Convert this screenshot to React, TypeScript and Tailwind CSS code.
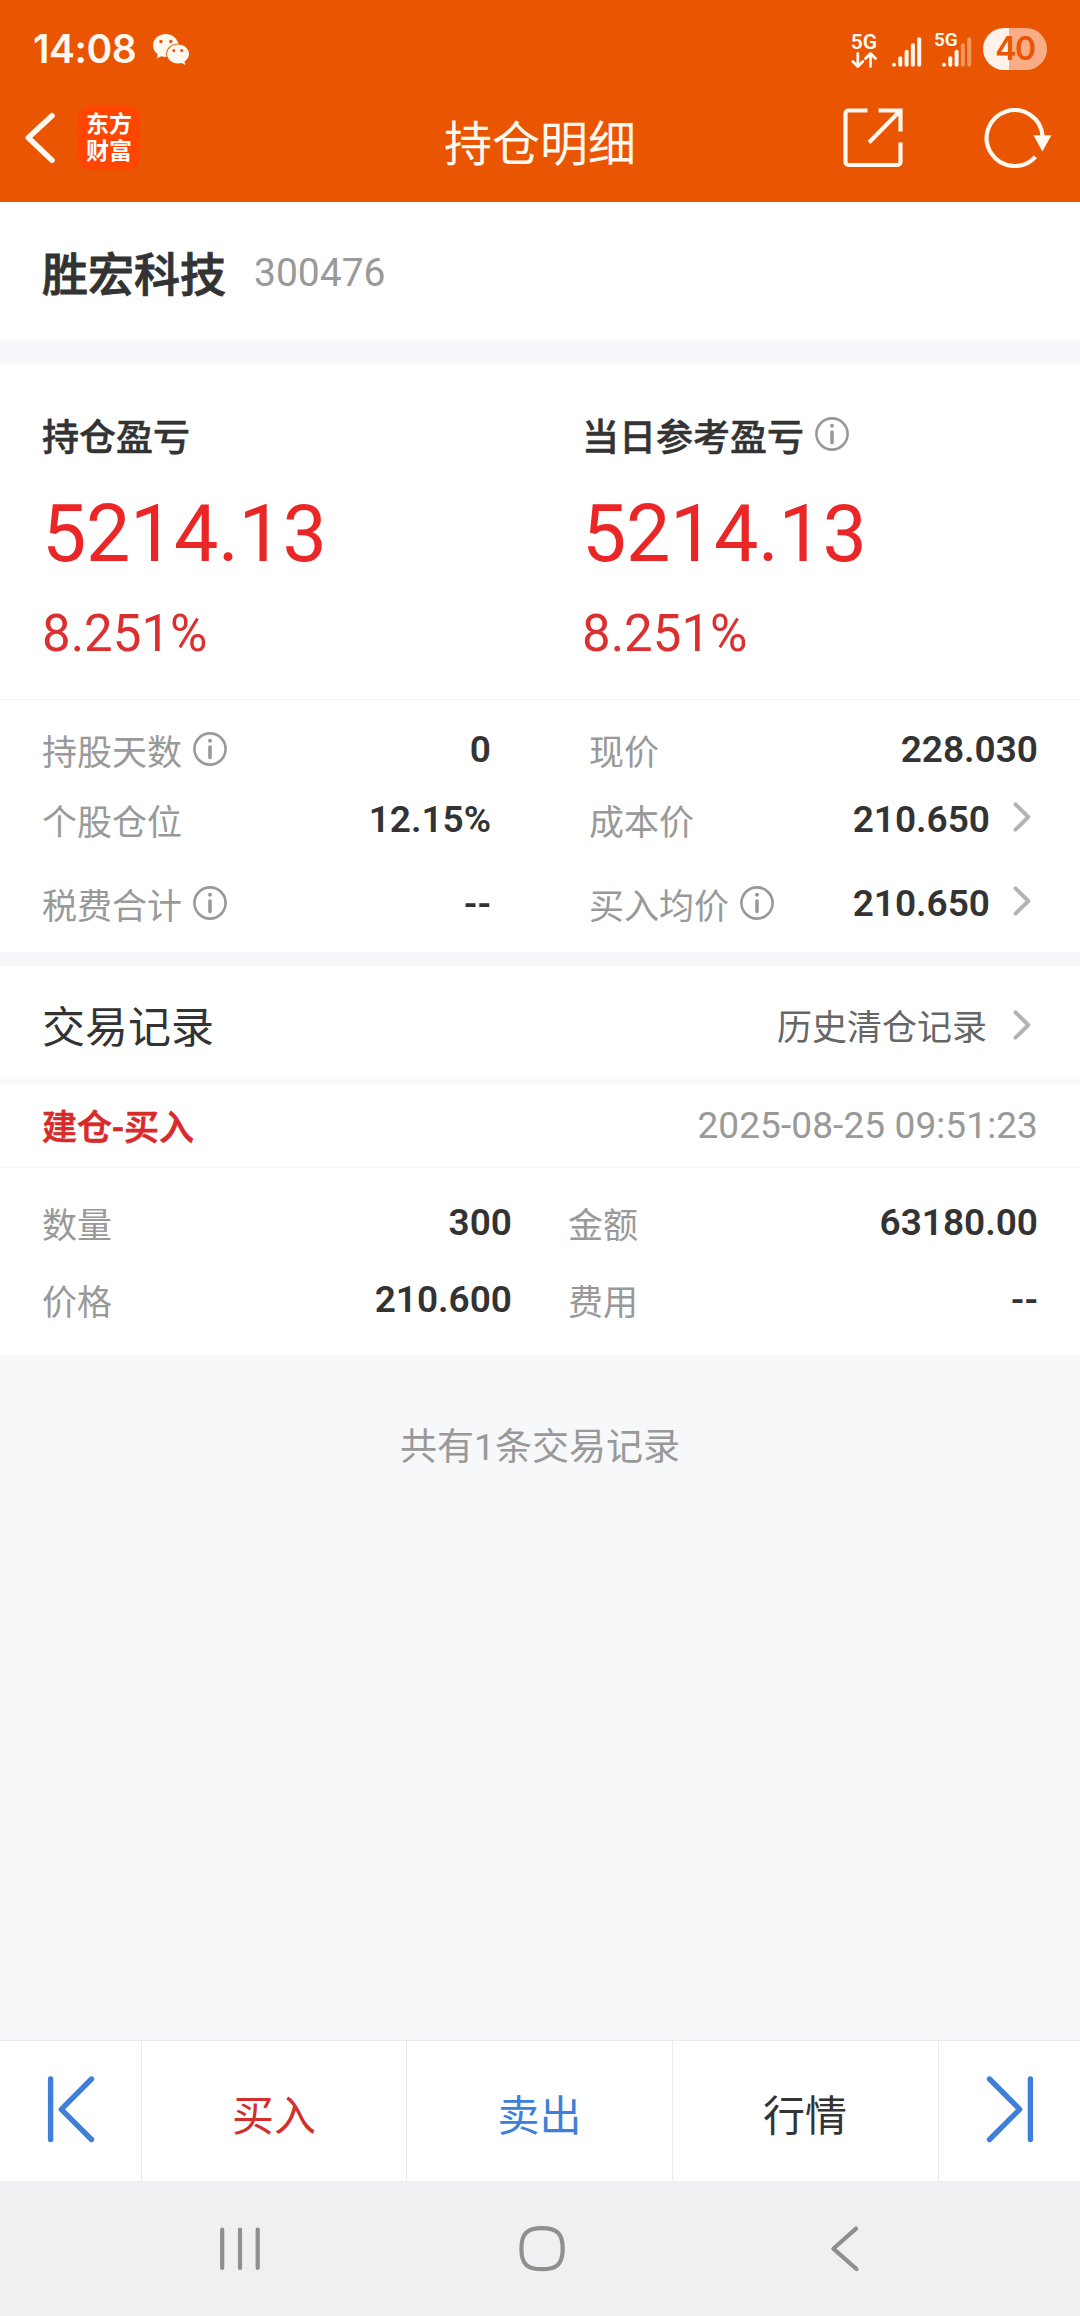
import type { ReactNode } from 'react';

type Metric = {
  label: string;
  value: string;
  info?: boolean;
  link?: boolean;
};

const summary = [
  { label: '持仓盈亏', amount: '5214.13', percent: '8.251%', info: false },
  { label: '当日参考盈亏', amount: '5214.13', percent: '8.251%', info: true },
];

const metricRows: { height: string; left: Metric; right: Metric }[] = [
  {
    height: 'h-[70px]',
    left: { label: '持股天数', value: '0', info: true },
    right: { label: '现价', value: '228.030' },
  },
  {
    height: 'h-[70px]',
    left: { label: '个股仓位', value: '12.15%' },
    right: { label: '成本价', value: '210.650', link: true },
  },
  {
    height: 'h-[98px]',
    left: { label: '税费合计', value: '--', info: true },
    right: { label: '买入均价', value: '210.650', info: true, link: true },
  },
];

const tradeRows: { left: Metric; right: Metric }[] = [
  { left: { label: '数量', value: '300' }, right: { label: '金额', value: '63180.00' } },
  { left: { label: '价格', value: '210.600' }, right: { label: '费用', value: '--' } },
];

function InfoIcon() {
  return (
    <svg className="w-[34px] h-[34px] shrink-0" viewBox="0 0 34 34" fill="none">
      <circle cx="17" cy="17" r="15.6" stroke="#999" strokeWidth="2.6" />
      <circle cx="17" cy="8.7" r="2" fill="#999" />
      <path d="M17 15v10.6" stroke="#999" strokeWidth="3.6" strokeLinecap="round" />
    </svg>
  );
}

function ChevronIcon() {
  return (
    <svg
      className="w-[18px] h-[30px] shrink-0"
      viewBox="0 0 18 30"
      fill="none"
      stroke="#b3b3b3"
      strokeWidth="4"
      strokeLinecap="round"
      strokeLinejoin="round"
    >
      <path d="M2.5 2.3 15.3 15 2.5 27.7" />
    </svg>
  );
}

function WechatIcon() {
  return (
    <svg className="w-9 h-[31px]" viewBox="0 0 36 31">
      <path
        fill="#fff8f0"
        d="M12.8 0C5.7 0 0 5 0 11.4c0 3.6 1.9 6.7 4.8 8.8L3.6 24.6l4.8-2.4c1.4.4 2.9.6 4.4.6h.9a10 10 0 0 1-.5-3.1c0-5.7 5-9.8 11.3-9.9h.9C24.2 4.2 19 0 12.8 0Z"
      />
      <path
        fill="#fff8f0"
        d="M25 10.6c-6.2 0-10.9 4.2-10.9 9.4S18.8 29.5 25 29.5c1.3 0 2.5-.2 3.7-.5l3.7 2-.9-3.6c2.7-1.7 4.5-4.4 4.5-7.4 0-5.2-4.9-9.4-11-9.4Z"
      />
      <g fill="#e95500">
        <circle cx="8" cy="7.5" r="1.7" />
        <circle cx="17.8" cy="7.5" r="1.7" />
        <circle cx="20.8" cy="16.4" r="1.5" />
        <circle cx="28.8" cy="16.4" r="1.5" />
      </g>
    </svg>
  );
}

function SignalBars({ level = 5 }: { level?: number }) {
  return (
    <svg className="w-[30px] h-[30px]" viewBox="0 0 30 30">
      {[4, 10.5, 17, 23.5, 29.5].map((h, i) => (
        <rect
          key={h}
          x={i * 6.3}
          y={29.8 - h}
          width="4"
          height={h}
          rx="2"
          fill="#fff8f0"
          opacity={i < level ? 1 : 0.4}
        />
      ))}
    </svg>
  );
}

function StatusBar() {
  return (
    <div className="flex items-start justify-between h-[86px] px-[33px] text-[#fff8f0]">
      <div className="flex items-start">
        <span className="w-[104px] pt-[29px] font-['Inter'] font-semibold text-[39px] leading-10 tracking-[-0.5px]">
          14:08
        </span>
        <div className="pt-[34px] pl-4">
          <WechatIcon />
        </div>
      </div>

      <div className="flex items-start">
        <div className="flex flex-col items-center w-[26px] pt-8">
          <span className="text-[21px] font-semibold leading-5">5G</span>
          <svg
            className="w-[26px] h-4"
            viewBox="0 0 26 16"
            fill="none"
            stroke="#fff8f0"
            strokeWidth="2.8"
            strokeLinecap="round"
            strokeLinejoin="round"
          >
            <path d="M6.8 1.4v13M1.8 9.6l5 5 5-5M19.5 14.6v-13M14.5 6.4l5-5 5 5" />
          </svg>
        </div>
        <div className="pt-[37px] ml-[15px]">
          <SignalBars />
        </div>
        <div className="relative w-[38px] pt-[37px] pl-2 ml-[12px]">
          <span className="absolute left-0 top-[31px] text-[19px] font-semibold leading-[18px]">5G</span>
          <SignalBars level={3} />
        </div>
        <div className="flex items-center justify-center w-16 h-[42px] mt-7 ml-[11px] rounded-full bg-[linear-gradient(90deg,#fff2eb_26px,#f8ad87_26px)]">
          <span className="font-['Inter'] font-semibold text-[32px] leading-[42px] tracking-[-1.5px] text-[#e95500]">
            40
          </span>
        </div>
      </div>
    </div>
  );
}

function Header() {
  return (
    <header className="h-[202px] bg-[#e95500]">
      <StatusBar />

      <div className="flex items-start h-[116px] px-6">
        <div className="flex flex-1 items-start">
          <svg
            className="w-8 h-[52px] mt-[26px]"
            viewBox="0 0 32 52"
            fill="none"
            stroke="#fff8f0"
            strokeWidth="5.6"
            strokeLinecap="round"
            strokeLinejoin="round"
          >
            <path d="M28 3.8 4.3 25.8 28 48.2" />
          </svg>
          {/* App logo */}
          <div className="flex flex-col items-center w-[62px] h-16 ml-[22px] mt-5 pt-[5px] rounded-xl bg-[#ff4500] text-white font-bold text-[23px] leading-[27px]">
            <span>东方</span>
            <span>财富</span>
          </div>
        </div>

        <h1 className="pt-[31px] text-[48px] leading-[56px] text-[#fff8f0]">持仓明细</h1>

        <div className="flex flex-1 items-start justify-end pt-[22px]">
          <svg
            className="w-[60px] h-[60px]"
            viewBox="0 0 60 60"
            fill="none"
            stroke="#fff8f0"
            strokeWidth="4.2"
          >
            <path d="M24.5 2.5H5.5a3 3 0 0 0-3 3v48.5a3 3 0 0 0 3 3h49a3 3 0 0 0 3-3V34.5" />
            <path d="M35.5 2.5h22v21M57 3 26 34.5" />
          </svg>
          <svg className="w-[68px] h-[60px] ml-[81px] mr-1" viewBox="0 0 68 60" fill="none">
            <path d="M58.6 28.5A28 28 0 1 0 51.4 48.8" stroke="#fff8f0" strokeWidth="4.2" />
            <path d="M49.4 27.2h18L58.4 43.5Z" fill="#fff8f0" />
          </svg>
        </div>
      </div>
    </header>
  );
}

function MetricCell({ label, value, info, link }: Metric) {
  return (
    <>
      <span className="pt-[9px] text-[35px] leading-10 text-[#999]">{label}</span>
      {info && (
        <div className="ml-[11px]">
          <InfoIcon />
        </div>
      )}
      <span className="ml-auto pt-px font-semibold text-[37px] leading-10 text-[#333]">{value}</span>
      {link && (
        <div className="pl-[23px] pr-[7px] pb-1">
          <ChevronIcon />
        </div>
      )}
    </>
  );
}

function TabCell({ className, children }: { className: string; children: ReactNode }) {
  return (
    <button className={`flex items-center justify-center pt-2.5 text-[42px] ${className}`}>
      {children}
    </button>
  );
}

function App() {
  return (
    <div className="flex flex-col w-[1080px] h-[2316px] bg-[#f7f8fa] font-['Roboto','Noto_Sans_CJK_SC',sans-serif] text-[#333]">
      <Header />

      {/* Stock */}
      <section className="flex items-center h-[138px] px-[42px] bg-white">
        <h2 className="pt-[7px] text-[46px] font-medium leading-[56px] [-webkit-text-stroke:0.9px]">
          胜宏科技
        </h2>
        <span className="ml-7 pt-[3px] text-[39px] leading-10 text-[#999]">300476</span>
      </section>

      {/* Profit and metrics */}
      <section className="mt-[23px] h-[589px] bg-white">
        <div className="grid grid-cols-2 h-[337px] border-b border-[#f3f4f6]">
          {summary.map((item) => (
            <div key={item.label} className="flex flex-col pl-[42px] pt-[51px]">
              <div className="flex items-center h-10">
                <span className="pt-[9px] text-[37px] font-medium leading-10 [-webkit-text-stroke:0.5px]">
                  {item.label}
                </span>
                {item.info && (
                  <div className="ml-[11px]">
                    <InfoIcon />
                  </div>
                )}
              </div>
              <span className="mt-10 text-[79px] leading-[80px] tracking-[-0.4px] text-[#ea2626]">
                {item.amount}
              </span>
              <span className="mt-[34px] text-[51px] leading-[52px] text-[#dc2f2f]">{item.percent}</span>
            </div>
          ))}
        </div>

        <div className="pt-[14px]">
          {metricRows.map((row) => (
            <div key={row.left.label} className={`flex ${row.height}`}>
              <div className="flex items-center w-[491px] pl-[42px]">
                <MetricCell {...row.left} />
              </div>
              <div className="flex items-center flex-1 pl-[98px] pr-[42px]">
                <MetricCell {...row.right} />
              </div>
            </div>
          ))}
        </div>
      </section>

      {/* Trade records */}
      <section className="mt-[14px] bg-white">
        <div className="flex items-center h-[117px] pl-[42px] pr-[49px] border-b-4 border-[#f7f8fa]">
          <h2 className="pt-[10px] text-[43px] leading-[50px]">交易记录</h2>
          <span className="ml-auto pt-[13px] text-[35px] leading-10 text-[#666]">历史清仓记录</span>
          <div className="ml-[26px] pt-1">
            <ChevronIcon />
          </div>
        </div>
        <div className="flex items-center justify-between h-[85px] px-[42px] border-b border-[#f3f4f6]">
          <span className="pt-[8px] text-[35px] font-medium leading-10 text-[#d92a2a] [-webkit-text-stroke:0.7px]">
            建仓-买入
          </span>
          <span className="pt-0.5 text-[37px] leading-10 tracking-[0.1px] text-[#999]">
            2025-08-25 09:51:23
          </span>
        </div>
        <div className="h-[187px] pt-4">
          {tradeRows.map((row) => (
            <div key={row.left.label} className="flex h-[77px]">
              <div className="flex items-center w-[512px] pl-[42px]">
                <MetricCell {...row.left} />
              </div>
              <div className="flex items-center flex-1 pl-[56px] pr-[42px]">
                <MetricCell {...row.right} />
              </div>
            </div>
          ))}
        </div>
      </section>

      <p className="pt-[73px] text-center text-[37px] leading-10 text-[#999]">共有1条交易记录</p>

      {/* Bottom actions */}
      <footer className="mt-auto">
        <div className="flex h-[141px] border-t border-[#e9ebee] bg-white">
          <button className="flex items-start w-[142px] pl-[47px] pt-[34px] border-r border-[#e9ebee]">
            <svg
              className="w-12 h-[68px]"
              viewBox="0 0 48 68"
              fill="none"
              stroke="#3e80d9"
              strokeWidth="5.4"
              strokeLinecap="round"
              strokeLinejoin="round"
            >
              <path d="M3.6 4v60.5M44.5 4 14.3 34.3l30.2 30.2" />
            </svg>
          </button>
          <TabCell className="w-[265px] border-r border-[#e9ebee] text-[#d42e2e]">买入</TabCell>
          <TabCell className="w-[266px] border-r border-[#e9ebee] text-[#3e80d9]">卖出</TabCell>
          <TabCell className="w-[266px] pr-px border-r border-[#e9ebee]">行情</TabCell>
          <button className="flex items-start flex-1 pl-[47px] pt-[34px]">
            <svg
              className="w-12 h-[68px]"
              viewBox="0 0 48 68"
              fill="none"
              stroke="#3e80d9"
              strokeWidth="5.4"
              strokeLinecap="round"
              strokeLinejoin="round"
            >
              <path d="M44.4 4v60.5M3.5 4l30.2 30.3L3.5 64.5" />
            </svg>
          </button>
        </div>

        {/* System navigation */}
        <nav className="flex items-start h-[135px] pl-[219px] pt-11 bg-[#f0f0f2]">
          <svg
            className="w-[42px] h-12"
            viewBox="0 0 42 48"
            fill="none"
            stroke="#8f8f8f"
            strokeWidth="4.2"
            strokeLinecap="round"
          >
            <path d="M3.2 4.5v38.5M21 4.5v38.5M38.7 4.5v38.5" />
          </svg>
          <svg className="w-12 h-12 ml-[257px]" viewBox="0 0 48 48" fill="none">
            <path
              d="M24 3.2C9 3.2 3.4 8.5 3.4 23.7S9 44.2 24 44.2s20.7-5.3 20.7-20.5S39 3.2 24 3.2Z"
              stroke="#8f8f8f"
              strokeWidth="4.2"
            />
          </svg>
          <svg
            className="w-8 h-12 ml-[263px]"
            viewBox="0 0 32 48"
            fill="none"
            stroke="#8f8f8f"
            strokeWidth="4.2"
            strokeLinecap="round"
            strokeLinejoin="round"
          >
            <path d="M27 3.6 4.3 23.7 27.5 44" />
          </svg>
        </nav>
      </footer>
    </div>
  );
}

export default App;
